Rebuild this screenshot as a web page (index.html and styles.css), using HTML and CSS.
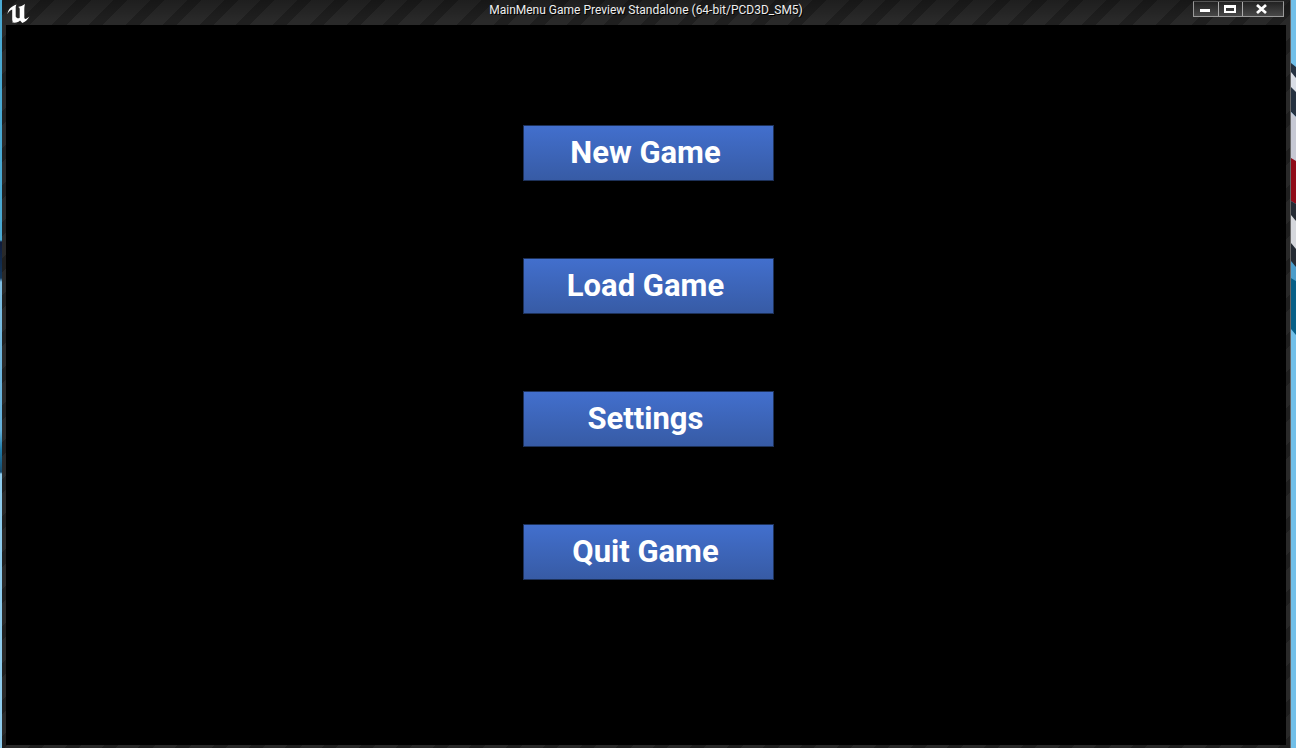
FILE: index.html
```html
<!DOCTYPE html>
<html lang="en">
<head>
<meta charset="utf-8">
<title>MainMenu Game Preview Standalone</title>
<link rel="stylesheet" href="styles.css">
</head>
<body>
<div class="desktop desktop-left"></div>
<div class="window">
  <header class="titlebar">
    <svg class="logo" viewBox="0 0 24 22" aria-hidden="true">
      <path fill="#fff" d="M0.500 12C1 7.500 4 4.500 9.500 2.500C8.700 4 8.700 5 8.700 6V14.500C9.500 16 11 17 12.700 15.800V7C12.700 5.700 12 5.200 11 5C13.500 4.500 15.800 3.500 18 2C17.300 4.500 17.300 7 17.300 9V15.500C17.500 17.500 19 17.500 22.500 14.500C20.500 18 18 20 15.300 21L13 18.500C11.500 20.300 9 21 5.200 20.500C6.200 20 5.200 18.800 5.200 17.500V7.500C3 8 1.500 10 .5 12Z"/>
    </svg>
    <h1 class="title">MainMenu Game Preview Standalone (64-bit/PCD3D_SM5)</h1>
    <div class="controls">
      <button class="control" type="button" aria-label="Minimize">
        <svg width="24" height="14" viewBox="0 0 24 14"><path fill="#fff" d="M6 7h10v3H6z"/></svg>
      </button>
      <button class="control narrow" type="button" aria-label="Maximize">
        <svg width="23" height="14" viewBox="0 0 23 14"><path fill="#fff" fill-rule="evenodd" d="M5 3h12v8H5zM7 6v3h8V6z"/></svg>
      </button>
      <button class="control wide" type="button" aria-label="Close">
        <svg width="40" height="14" viewBox="0 0 40 14"><path fill="none" stroke="#fff" stroke-width="2.800" d="M14 3l9 8M23 3l-9 8"/></svg>
      </button>
    </div>
  </header>
  <main class="menu">
    <button class="item" type="button">New Game</button>
    <button class="item" type="button">Load Game</button>
    <button class="item" type="button">Settings</button>
    <button class="item" type="button">Quit Game</button>
  </main>
</div>
<div class="desktop desktop-right">
  <svg class="wallpaper" width="5" height="748" viewBox="0 0 5 748" aria-hidden="true">
    <path fill="#253140" d="M0 63l5 4v50l-5-5z"/>
    <path fill="#d9dde5" d="M0 72l5 6v14l-5-5z"/>
    <path fill="#c6c8d3" d="M0 112l5 5v45l-5-4z"/>
    <path fill="#900b18" d="M0 158l5 3v43l-5-3z"/>
    <path fill="#252b34" d="M0 201l5 3v68l-5-7z"/>
    <path fill="#d5d7dc" d="M0 215l5 6v28l-5-6z"/>
    <path fill="#4b9cca" d="M0 261l5 6v14l-5-3z"/>
    <path fill="#075f87" d="M0 278l5 3v54l-5-6z"/>
  </svg>
</div>
</body>
</html>
```
FILE: styles.css
```css
* {
  box-sizing: border-box;
}

body {
  display: flex;
  min-height: 100vh;
  margin: 0;
  overflow: hidden;
  background: #72bfe8;
  font-family: Roboto, "Liberation Sans", sans-serif;
}

.desktop {
  flex: none;
  overflow: hidden;
}

.desktop-left {
  width: 2px;
  background: linear-gradient(#4aa9d2 240px, #101c3b 242px, #12375c 278px, #80bfe2 282px, #64b0da 430px, #207ba8 450px, #174d70 472px, #8fcced 474px);
}

.desktop-right {
  width: 5px;
}

.wallpaper {
  display: block;
}

.window {
  display: flex;
  flex: 1;
  flex-direction: column;
  padding: 0 4px 3px;
  border-right: 1px solid #666;
  background: linear-gradient(#0004, #0000 20px), repeating-linear-gradient(135deg, #292929 0 1px, #1f1f1f 1px 11px, #292929 11px 26px);
}

.titlebar {
  display: grid;
  grid-template-columns: 1fr auto 1fr;
  height: 25px;
}

.logo {
  width: 24px;
  height: 22px;
  margin: 2px 0 0 1px;
}

.title {
  margin: 2px 0 0;
  color: #eee;
  font-size: 12px;
  font-weight: 400;
  line-height: 16px;
  text-shadow: 1px 1px #000;
}

.controls {
  display: flex;
  justify-self: end;
  height: 16px;
  margin: 1px 2px 0 0;
  border: 1px solid #999;
  border-top-color: #555;
}

.control {
  width: 25px;
  padding: 0;
  border: 0;
  border-right: 1px solid #aaa;
  background: linear-gradient(#222, #484848);
}

.control svg {
  display: block;
  height: 14px;
}

.narrow {
  width: 24px;
}

.wide {
  width: 40px;
  border-right: 0;
}

.menu {
  display: flex;
  flex: 1;
  flex-direction: column;
  align-items: center;
  gap: 77px;
  padding: 100px 0 40px 5px;
  background: #000;
}

.item {
  width: 251px;
  height: 56px;
  padding: 0 6px 0 0;
  border: 1px solid #1d3159;
  background: linear-gradient(#426fcd, #375ba5);
  color: #fff;
  font-family: inherit;
  font-size: 31px;
  font-weight: 700;
  line-height: 38px;
}
```
